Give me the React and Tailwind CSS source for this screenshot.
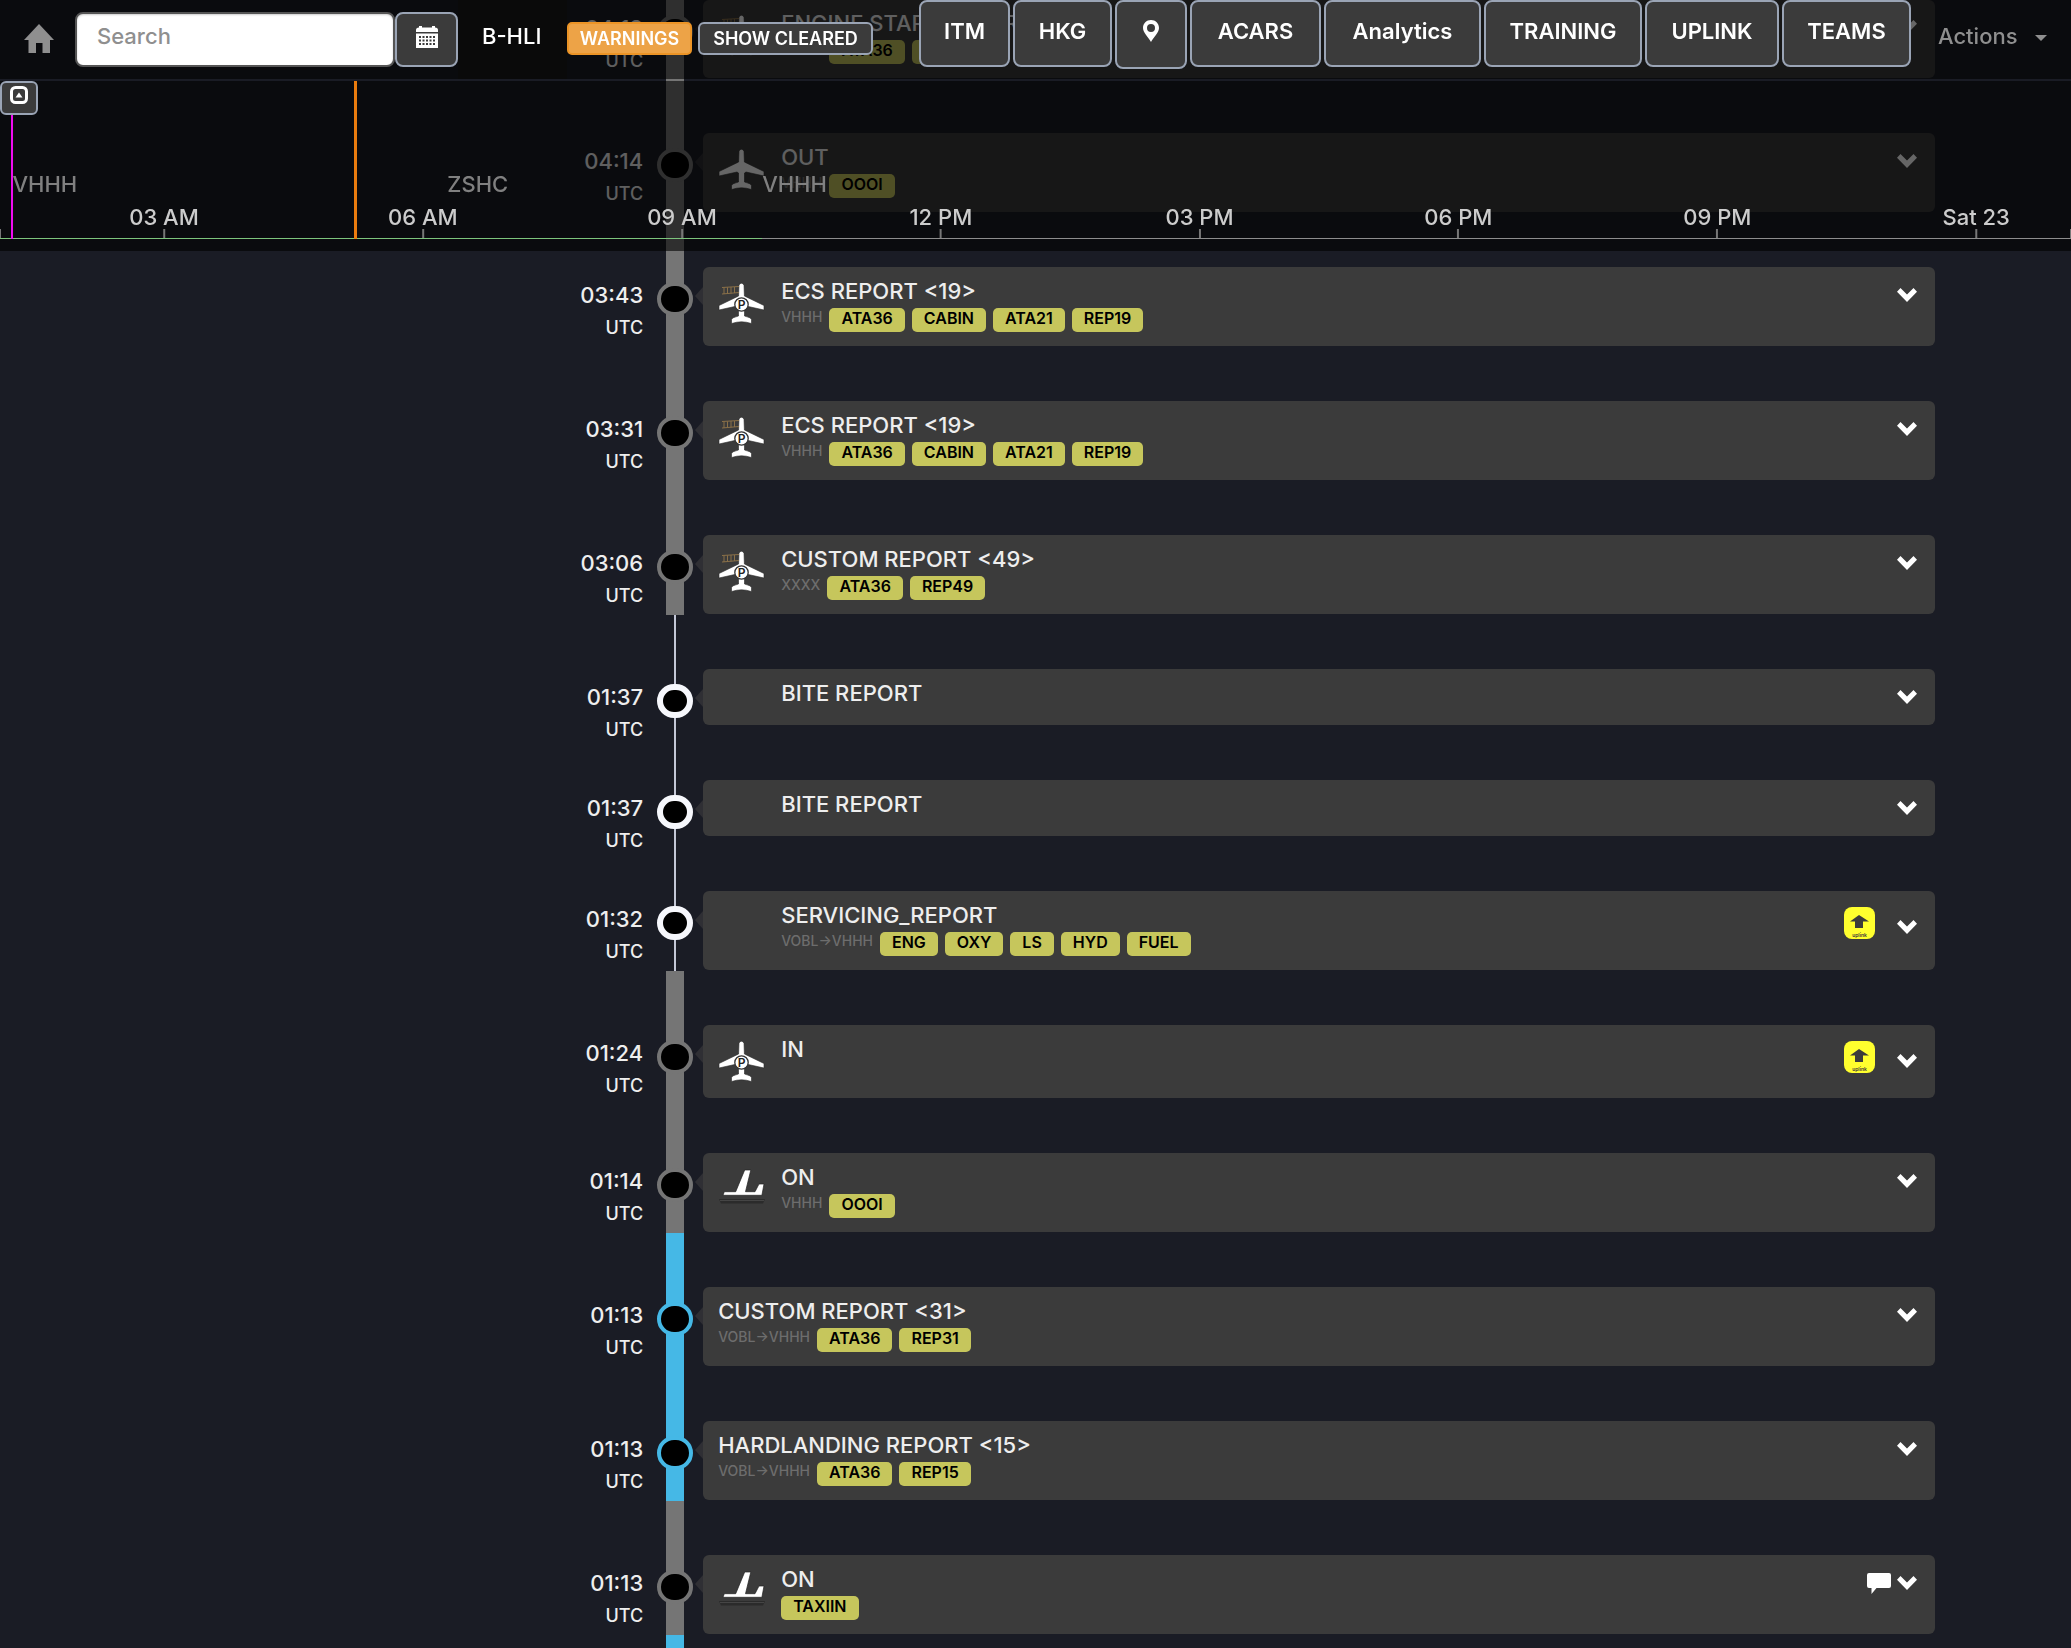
import React from "react";

const TEXT = "font-['Inter',sans-serif] font-medium";

const PlaneIcon = ({ parked, ladder }) => (
  <svg viewBox="0 0 47 47" className="h-[47px] w-[47px] shrink-0" aria-hidden="true">
    <path
      d="M21 6 Q23.3 2.5 26 6 L26.4 17 L46 26.5 L46 31 L28 27 L26.5 28 L26.5 37 Q33 38.500 33.500 40.500 L33.500 44.500 Q28 42.800 23.500 42.800 Q19 42.800 13.500 44.500 L13.500 40.500 Q14 38.500 20.500 37 L20.500 28 L19 27 L1 31 L1 26.500 L20.600 17 Z"
      fill="#fff"
      stroke="#2a2a2a"
      strokeWidth="0.6"
    />
    {parked && (
      <g>
        <circle cx="23.500" cy="25.500" r="6.700" fill="#fff" stroke="#333" strokeWidth="1.300" />
        <text x="23.500" y="29.800" textAnchor="middle" fontSize="12" fontWeight="600" fill="#222">
          P
        </text>
      </g>
    )}
    {ladder && (
      <path
        d="M4 8.500 L21 7.500 M4 15 L21 13.500 M6 8.500 V15 M9.500 8.300 V14.800 M13 8 V14.500 M16.500 8 V14"
        stroke="#8a7048"
        strokeWidth="1"
        fill="none"
      />
    )}
  </svg>
);

const LandedIcon = () => (
  <svg viewBox="0 0 47 47" className="h-[47px] w-[47px] shrink-0" aria-hidden="true">
    <path d="M1 34 H47 L45 38.500 H3 Z" fill="#2b2b2b" />
    <path d="M2 35.500 H46" stroke="#454545" strokeWidth="1" />
    <path
      d="M26.700 5 H32.800 L27.500 26.700 H37 L41 19 H46 L43.900 30.300 H5 L6.300 26.700 H17.700 Z"
      fill="#fff"
      stroke="#222"
      strokeWidth="0.700"
    />
  </svg>
);

const Chevron = () => (
  <svg viewBox="0 0 20 14" className="h-[14px] w-5" aria-hidden="true">
    <path d="M3.500 0 L10 6.500 L16.500 0 L20 3.800 L10 14 L0 3.800 Z" fill="#fff" />
  </svg>
);

const UplinkBadge = () => (
  <svg viewBox="0 0 31 32" className="mr-[22px] h-8 w-[31px]" role="img" aria-label="uplink">
    <rect width="31" height="32" rx="8" fill="#ffff2e" />
    <path d="M15 8 L25 14.500 H19 V21 H11 V14.500 H6 Z" fill="#3b3b3b" />
    <text x="15.500" y="30" textAnchor="middle" fontSize="5" fontWeight="600" fill="#3b3b3b">
      uplink
    </text>
  </svg>
);

const CommentIcon = () => (
  <svg viewBox="0 0 24 21" className="mr-1.5 h-[21px] w-6" aria-hidden="true">
    <path d="M2 0 H22 Q24 0 24 2 V13 Q24 15 22 15 H9.500 L4.500 21 V15 H2 Q0 15 0 13 V2 Q0 0 2 0 Z" fill="#fff" />
  </svg>
);

const EVENTS = [
  { time: "04:18", title: "ENGINE START REPORT <10>", icon: "ladder", route: "VHHH", tags: ["ATA36", "REP10"], phase: "ground", first: true },
  { time: "04:14", title: "OUT", icon: "plane", route: "VHHH", tags: ["OOOI"], phase: "ground" },
  { time: "03:43", title: "ECS REPORT <19>", icon: "ladder", route: "VHHH", tags: ["ATA36", "CABIN", "ATA21", "REP19"], phase: "ground" },
  { time: "03:31", title: "ECS REPORT <19>", icon: "ladder", route: "VHHH", tags: ["ATA36", "CABIN", "ATA21", "REP19"], phase: "ground" },
  { time: "03:06", title: "CUSTOM REPORT <49>", icon: "ladder", route: "XXXX", tags: ["ATA36", "REP49"], phase: "ground" },
  { time: "01:37", title: "BITE REPORT", icon: "blank", phase: "none" },
  { time: "01:37", title: "BITE REPORT", icon: "blank", phase: "none" },
  { time: "01:32", title: "SERVICING_REPORT", icon: "blank", route: "VOBL→VHHH", tags: ["ENG", "OXY", "LS", "HYD", "FUEL"], phase: "none", badge: "uplink" },
  { time: "01:24", title: "IN", icon: "parked", phase: "ground", badge: "uplink" },
  { time: "01:14", title: "ON", icon: "landed", route: "VHHH", tags: ["OOOI"], phase: "ground" },
  { time: "01:13", title: "CUSTOM REPORT <31>", route: "VOBL→VHHH", tags: ["ATA36", "REP31"], phase: "air" },
  { time: "01:13", title: "HARDLANDING REPORT <15>", route: "VOBL→VHHH", tags: ["ATA36", "REP15"], phase: "air" },
  { time: "01:13", title: "ON", icon: "landed", tags: ["TAXIIN"], phase: "ground", badge: "comment" },
];

const LINE = {
  ground: "w-[18px] bg-[#757575]",
  air: "w-[18px] bg-[#45b8e6]",
  none: "w-0.5 bg-[#c3c7d6]",
};

const DOT = {
  ground: "border-4 border-[#757575]",
  air: "border-4 border-[#45b8e6]",
  none: "border-[6px] border-[#f6f7fc]",
};

function EventIcon({ kind }) {
  if (!kind) return null;
  if (kind === "blank") return <span className="w-[47px] shrink-0" />;
  if (kind === "landed") return <LandedIcon />;
  return <PlaneIcon parked={kind !== "plane"} ladder={kind === "ladder"} />;
}

function EventRow({ event }) {
  const { time, title, icon, route, tags, phase, badge, first } = event;
  const pad = first ? "pt-0" : "pt-[54px]";
  return (
    <li className="flex">
      <div className={`-mb-6 w-[31.25%] shrink-0 pr-1 text-right text-[#eee] ${pad}`}>
        <div className="pt-3 text-[22px] leading-8">{time}</div>
        <div className="text-lg leading-[34px]">UTC</div>
      </div>
      <div className={`relative flex w-14 shrink-0 items-start justify-center ${pad}`}>
        <span className={`absolute inset-y-0 ${LINE[phase]}`} />
        <span className={`relative mt-[15px] h-[34px] w-9 rounded-full bg-black ${DOT[phase]}`} />
      </div>
      <div className={`mr-34 min-w-0 flex-1 pb-px ${pad}`}>
        <article className={`relative flex min-h-14 gap-4 rounded-md bg-[#3b3b3b] pr-[18px] pl-[15px] ${first ? "pt-[11px]" : "pt-3"} pb-3.5`}>
          <span className="absolute top-5 right-full border-y-[9px] border-r-8 border-y-transparent border-r-[#2f2f34]" />
          <EventIcon kind={icon} />
          <div className="min-w-0 flex-1">
            <h2 className="text-[22px] leading-6 text-[#eee]">{title}</h2>
            {tags && (
              <div className="mt-[5px] flex gap-[7px]">
                {route && <span className="text-sm leading-[18px] text-[#6d6d6d]">{route}</span>}
                {tags.map((tag) => (
                  <span key={tag} className="h-6 rounded-[5px] bg-[#c6c65c] px-3 text-base leading-5 font-semibold text-black">
                    {tag}
                  </span>
                ))}
              </div>
            )}
          </div>
          <div className={`-mb-0.5 flex h-8 items-center self-start ${badge === "uplink" ? "mt-1" : ""}`}>
            {badge === "uplink" && <UplinkBadge />}
            {badge === "comment" && <CommentIcon />}
            <button type="button" aria-label={`Expand ${title}`} className={badge === "uplink" ? "pt-2" : ""}>
              <Chevron />
            </button>
          </div>
        </article>
      </div>
    </li>
  );
}

const NAV = [
  { label: "ITM", size: "w-[91px]" },
  { label: "HKG", size: "w-[99px]" },
  { label: "pin", size: "w-[72px]" },
  { label: "ACARS", size: "w-[131px]" },
  { label: "Analytics", size: "w-[157px]" },
  { label: "TRAINING", size: "w-[158px]" },
  { label: "UPLINK", size: "w-[134px]" },
  { label: "TEAMS", size: "w-[129px]" },
];

const BTN = "rounded-lg border-2 border-[#9aa4b5] bg-[#3b3b3b] text-white";

function TopBar() {
  return (
    <header className="flex h-[79px] bg-black/60 pr-6">
      <a href="#home" aria-label="Home" className="mt-6 ml-6">
        <svg viewBox="0 0 30 29" className="h-[29px] w-[30px]">
          <path d="M15 0 L30 16 H26 V29 H18.500 V19 H12 V29 H4.500 V16 H0 Z" fill="#8f8f8f" />
        </svg>
      </a>
      <form className="mt-3 ml-[21px] flex h-[55px]">
        <input
          type="text"
          aria-label="Search"
          placeholder="Search"
          className="w-80 rounded-lg border-2 border-[#555] bg-white px-5 pb-1.5 text-[22px] text-black shadow-[inset_0_1px_2px_rgba(0,0,0,0.2)] placeholder:text-[#8f8f8f]"
        />
        <button type="button" aria-label="Calendar" className={`flex w-[63px] justify-center pt-[11px] ${BTN}`}>
          <svg viewBox="0 0 22 23" className="h-[23px] w-[22px]">
            <path d="M3 1 H6 V2.500 H16 V1 H19 V2.500 Q22 2.500 22 5 V7 H0 V5 Q0 2.500 3 2.500 Z M0 8.500 H22 V23 H0 Z" fill="#fff" />
            <path d="M3 12 H19.500 M3 15.500 H19.500 M3 19 H19.500" stroke="#3b3b3b" strokeWidth="2" strokeDasharray="2 1.500" />
          </svg>
        </button>
      </form>
      <a href="#b-hli" className="w-[109px] shrink-0 bg-[#0a0a0a] pt-5 pl-6 text-[22px] leading-8 text-white">
        B-HLI
      </a>
      <div className="mt-[22px] flex h-[33px] shrink-0 gap-1.5 text-lg leading-[27px] font-semibold text-white">
        <button type="button" className="w-[125px] rounded-[5px] border-2 border-[#ec9426] bg-[#eda347]">WARNINGS</button>
        <button type="button" className="w-[175px] rounded-md border-2 border-[#9aa4b5] bg-[#3b3b3b] whitespace-nowrap">SHOW CLEARED</button>
      </div>
      <nav className="ml-auto flex shrink-0 items-start gap-[3px] text-[22px] leading-8 font-semibold text-white">
        {NAV.map(({ label, size }) =>
          label === "pin" ? (
            <button key={label} type="button" aria-label="Location" className={`flex h-[69px] justify-center pt-[18px] ${size} ${BTN}`}>
              <svg viewBox="0 0 16 22" className="h-[22px] w-4">
                <path fillRule="evenodd" d="M8 0 C12.500 0 16 3.500 16 8 C16 13 10.500 17 8 22 C5.500 17 0 13 0 8 C0 3.500 3.500 0 8 0 Z M8 4 A4 4 0 1 0 8 12 A4 4 0 1 0 8 4 Z" fill="#fff" />
              </svg>
            </button>
          ) : (
            <button key={label} type="button" className={`h-[67px] pb-1.5 ${size} ${BTN}`}>
              {label}
            </button>
          )
        )}
        <button type="button" className="mt-5 ml-6 flex w-[109px] items-center justify-between font-medium text-[#8f8f8f]">
          Actions
          <span className="mt-1 border-x-6 border-t-6 border-x-transparent border-t-[#8f8f8f]" />
        </button>
      </nav>
    </header>
  );
}

const TICKS = [
  { at: 7.92, label: "03 AM" },
  { at: 20.42, label: "06 AM" },
  { at: 32.93, label: "09 AM" },
  { at: 45.43, label: "12 PM" },
  { at: 57.92, label: "03 PM" },
  { at: 70.42, label: "06 PM" },
  { at: 82.92, label: "09 PM" },
  { at: 95.42, label: "Sat 23" },
];

const STATIONS = [
  { at: 0.6, label: "VHHH" },
  { at: 21.6, label: "ZSHC" },
  { at: 36.8, label: "VHHH" },
];

function TimeScale() {
  return (
    <section aria-label="Flight time scale" className="relative mt-0.5 h-[170px] bg-black/60 text-[22px] leading-8">
      {STATIONS.map((s) => (
        <span key={s.at} className="absolute top-[87px] text-[#808080]" style={{ left: `${s.at}%` }}>
          {s.label}
        </span>
      ))}
      {TICKS.map((t) => (
        <span
          key={t.at}
          className="absolute top-[120px] flex -translate-x-1/2 flex-col items-center whitespace-nowrap text-[#ccc]"
          style={{ left: `${t.at}%` }}
        >
          {t.label}
          <span className="absolute top-7 h-2.5 w-0.5 bg-[#777]" />
        </span>
      ))}
      <span className="absolute top-[148px] left-0 h-2.5 w-px bg-[#777]" />
      <span className="absolute top-[148px] right-0 h-2.5 w-px bg-[#777]" />
      <span className="absolute top-[157px] h-px w-full bg-[#8d8d8d]" />
      <span className="absolute top-[157px] h-px w-[36.8%] bg-[#7cc47c]" />
      <span className="absolute top-0 left-[11px] h-[158px] w-0.5 bg-[#f00cf0]" />
      <span className="absolute top-0 left-[17.1%] h-[158px] w-[3px] bg-[#ea7c0e]" />
      <button type="button" aria-label="Collapse" className="absolute top-0 left-0 flex h-[34px] w-[38px] justify-center rounded-md border-2 border-[#9aa4b5] bg-[#3b3b3b] pt-[3px]">
        <svg viewBox="0 0 18 18" className="size-[18px]">
          <rect x="1.500" y="1.500" width="15" height="15" rx="4" fill="none" stroke="#fff" strokeWidth="3" />
          <path d="M9 6.500 L12.500 11.500 H5.500 Z" fill="#fff" />
        </svg>
      </button>
    </section>
  );
}

export default function App() {
  return (
    <div className={`flex h-screen flex-col overflow-hidden bg-[#1a1c25] ${TEXT}`}>
      <ol className="shrink-0">
        {EVENTS.map((event, i) => (
          <EventRow key={i} event={event} />
        ))}
      </ol>
      <div className="flex flex-1 pl-[31.25%]">
        <div className="flex w-14 justify-center">
          <span className={LINE.air} />
        </div>
      </div>
      <div className="fixed inset-x-0 top-0">
        <TopBar />
        <TimeScale />
      </div>
    </div>
  );
}
